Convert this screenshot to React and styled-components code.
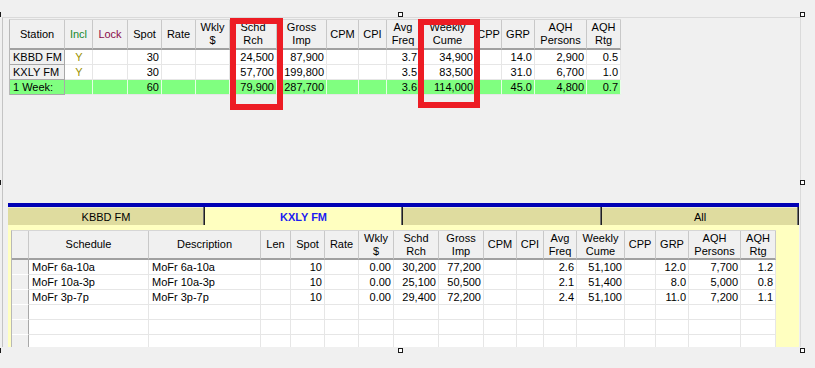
import React from "react";
import styled, { createGlobalStyle } from "styled-components";

const GlobalStyle = createGlobalStyle`
  html, body {
    margin: 0;
    padding: 0;
    background: #f0f0f0;
  }
  body {
    font-family: "Liberation Sans", Arial, sans-serif;
    font-size: 11px;
    color: #000;
  }
`;

const Stage = styled.div`
  position: relative;
  width: 815px;
  height: 368px;
  overflow: hidden;
  box-sizing: border-box;
  padding: 17px 0 0 2px;
`;

const Frame = styled.div`
  width: 799px;
  height: 330px;
  box-sizing: border-box;
  border-top: 1px solid #dadada;
  border-left: 1px solid #c4c4c4;
  border-right: 1px solid #dadada;
  display: flex;
  flex-direction: column;
  overflow: hidden;
`;

const TopArea = styled.div`
  flex: 1;
  padding: 1px 0 0 6px;
`;

const Grid = styled.div`
  display: grid;
  grid-template-columns: ${(p) => p.$cols};
  width: max-content;
  border-top: 1px solid #d6d6d6;
  border-left: 1px solid #b8b8b8;
`;

const HeadCell = styled.div`
  box-sizing: border-box;
  height: ${(p) => p.$h}px;
  display: flex;
  align-items: center;
  justify-content: center;
  text-align: center;
  white-space: pre-line;
  line-height: 13px;
  color: ${(p) => p.$color || "#000"};
  background: #f0f0f0;
  border-right: 1px solid #c8c8c8;
  border-bottom: 2px solid #a0a0a0;
  overflow: hidden;
`;

const Cell = styled.div`
  box-sizing: border-box;
  height: 15px;
  line-height: 14px;
  padding: 0 2px 0 3px;
  white-space: nowrap;
  overflow: hidden;
  text-align: ${(p) => p.$align || "left"};
  color: ${(p) => p.$color || "#000"};
  background: ${(p) => (p.$green ? "#80ff80" : p.$fixed ? "#f0f0f0" : "#fff")};
  border-right: 1px solid
    ${(p) => (p.$fixed ? "#a8a8a8" : p.$green ? "#e6ffe6" : "#e6e6e6")};
  border-bottom: 1px solid
    ${(p) => (p.$fixed ? (p.$rowHead ? "#ffffff" : "#a8a8a8") : "#e6e6e6")};
`;

const BottomPanel = styled.div`
  height: 144px;
  width: 791px;
  margin-left: 5px;
  display: flex;
  flex-direction: column;
`;

const BlueBar = styled.div`
  height: 4px;
  background: #0000b4;
`;

const TabStrip = styled.div`
  display: grid;
  grid-template-columns: 197px 198px 199px 197px;
  height: 18px;
`;

const Tab = styled.div`
  box-sizing: border-box;
  display: flex;
  align-items: center;
  justify-content: center;
  padding-top: 1px;
  background: ${(p) => (p.$active ? "#ffffc0" : "#dfdc9f")};
  border-right: 1px solid #202020;
  box-shadow: inset -1px 0 0 #707070, inset 0 1px 0 ${(p) => (p.$active ? "#ffffe0" : "#ecead0")};
  color: ${(p) => (p.$active ? "#1c1cf0" : "#000")};
  font-weight: ${(p) => (p.$active ? "bold" : "normal")};
`;

const TabBody = styled.div`
  flex: 1;
  background: #ffffc0;
  padding: 5px 0 0 3px;
  overflow: hidden;
`;

const Highlight = styled.div`
  position: absolute;
  box-sizing: border-box;
  left: ${(p) => p.$x}px;
  top: ${(p) => p.$y}px;
  width: ${(p) => p.$w}px;
  height: ${(p) => p.$h}px;
  border: 6px solid #ed1c24;
  pointer-events: none;
`;

const Handle = styled.span`
  position: absolute;
  box-sizing: border-box;
  left: ${(p) => p.$x}px;
  top: ${(p) => p.$y}px;
  width: 5px;
  height: 5px;
  border: 1px solid #1a1a1a;
  background: #fff;
`;

const topColumns = [
  { label: "Station", w: 55, align: "left", fixed: true },
  { label: "Incl", w: 28, align: "center", color: "#168a2c", cellColor: "#9a9000" },
  { label: "Lock", w: 35, align: "center", color: "#8a0c4a" },
  { label: "Spot", w: 34, align: "right" },
  { label: "Rate", w: 34, align: "right" },
  { label: "Wkly\n$", w: 34, align: "right" },
  { label: "Schd\nRch", w: 47, align: "right" },
  { label: "Gross\nImp", w: 50, align: "right" },
  { label: "CPM", w: 32, align: "right" },
  { label: "CPI", w: 28, align: "right" },
  { label: "Avg\nFreq", w: 33, align: "right" },
  { label: "Weekly\nCume", w: 56, align: "right" },
  { label: "CPP", w: 26, align: "right" },
  { label: "GRP", w: 33, align: "right" },
  { label: "AQH\nPersons", w: 52, align: "right" },
  { label: "AQH\nRtg", w: 34, align: "right" },
];

const topRows = [
  { cells: ["KBBD FM", "Y", "", "30", "", "", "24,500", "87,900", "", "", "3.7", "34,900", "", "14.0", "2,900", "0.5"] },
  { cells: ["KXLY FM", "Y", "", "30", "", "", "57,700", "199,800", "", "", "3.5", "83,500", "", "31.0", "6,700", "1.0"] },
  { cells: ["1 Week:", "", "", "60", "", "", "79,900", "287,700", "", "", "3.6", "114,000", "", "45.0", "4,800", "0.7"], green: true },
];

const bottomColumns = [
  { label: "", w: 17, align: "left", rowHead: true },
  { label: "Schedule", w: 120, align: "left" },
  { label: "Description", w: 112, align: "left" },
  { label: "Len", w: 30, align: "right" },
  { label: "Spot", w: 34, align: "right" },
  { label: "Rate", w: 34, align: "right" },
  { label: "Wkly\n$", w: 35, align: "right" },
  { label: "Schd\nRch", w: 45, align: "right" },
  { label: "Gross\nImp", w: 45, align: "right" },
  { label: "CPM", w: 33, align: "right" },
  { label: "CPI", w: 27, align: "right" },
  { label: "Avg\nFreq", w: 33, align: "right" },
  { label: "Weekly\nCume", w: 48, align: "right" },
  { label: "CPP", w: 31, align: "right" },
  { label: "GRP", w: 33, align: "right" },
  { label: "AQH\nPersons", w: 52, align: "right" },
  { label: "AQH\nRtg", w: 35, align: "right" },
];

const blank = Array(17).fill("");

const bottomRows = [
  ["", "MoFr 6a-10a", "MoFr 6a-10a", "", "10", "", "0.00", "30,200", "77,200", "", "", "2.6", "51,100", "", "12.0", "7,700", "1.2"],
  ["", "MoFr 10a-3p", "MoFr 10a-3p", "", "10", "", "0.00", "25,100", "50,500", "", "", "2.1", "51,400", "", "8.0", "5,000", "0.8"],
  ["", "MoFr 3p-7p", "MoFr 3p-7p", "", "10", "", "0.00", "29,400", "72,200", "", "", "2.4", "51,100", "", "11.0", "7,200", "1.1"],
  blank,
  blank,
  blank,
];

const tabs = [
  { label: "KBBD FM" },
  { label: "KXLY FM", active: true },
  { label: "" },
  { label: "All" },
];

const handles = [
  [-4, 12], [398, 12], [800, 12],
  [-4, 180], [800, 180],
  [-4, 348], [398, 348], [800, 348],
];

const colTemplate = (cols) => cols.map((c) => `${c.w}px`).join(" ");

const App = () => {
  return (
    <>
      <GlobalStyle />
      <Stage>
        <Frame>
          <TopArea>
            <Grid $cols={colTemplate(topColumns)}>
              {topColumns.map((c, i) => (
                <HeadCell key={"h" + i} $h={30} $color={c.color}>
                  {c.label}
                </HeadCell>
              ))}
              {topRows.map((row, r) =>
                row.cells.map((v, i) => (
                  <Cell
                    key={r + "-" + i}
                    $align={topColumns[i].align}
                    $fixed={topColumns[i].fixed}
                    $green={row.green}
                    $color={topColumns[i].cellColor}
                  >
                    {v}
                  </Cell>
                ))
              )}
            </Grid>
          </TopArea>

          <BottomPanel>
            <BlueBar />
            <TabStrip>
              {tabs.map((t, i) => (
                <Tab key={i} $active={t.active}>
                  {t.label}
                </Tab>
              ))}
            </TabStrip>
            <TabBody>
              <Grid $cols={colTemplate(bottomColumns)}>
                {bottomColumns.map((c, i) => (
                  <HeadCell key={"bh" + i} $h={29}>
                    {c.label}
                  </HeadCell>
                ))}
                {bottomRows.map((row, r) =>
                  row.map((v, i) => (
                    <Cell
                      key={r + "-" + i}
                      $align={bottomColumns[i].align}
                      $fixed={bottomColumns[i].rowHead}
                      $rowHead={bottomColumns[i].rowHead}
                    >
                      {v}
                    </Cell>
                  ))
                )}
              </Grid>
            </TabBody>
          </BottomPanel>
        </Frame>

        {/* annotation boxes drawn over the top grid */}
        <Highlight $x={230} $y={18} $w={53} $h={92} />
        <Highlight $x={418} $y={19} $w={62} $h={89} />

        {handles.map(([x, y], i) => (
          <Handle key={i} $x={x} $y={y} />
        ))}
      </Stage>
    </>
  );
};

export default App;
